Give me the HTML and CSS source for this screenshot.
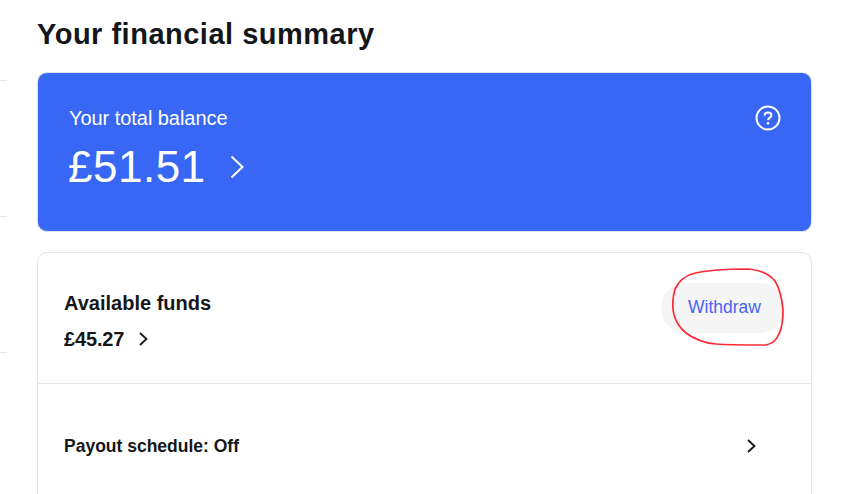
FILE: index.html
```html
<!DOCTYPE html>
<html lang="en">
<head>
    <meta charset="UTF-8">
    <title>Your financial summary</title>
    <link rel="stylesheet" href="styles.css">
</head>
<body>
    <div class="side">
        <div class="side-row side-row-first"></div>
        <div class="side-row"></div>
        <div class="side-row"></div>
    </div>
    <div class="main">
        <h1 class="page-title">Your financial summary</h1>
        <div class="balance">
            <div class="balance-text">
                <div class="balance-label">Your total balance</div>
                <div class="balance-amount">
                    £51.51
                    <svg class="balance-arrow" viewBox="0 0 14 24" width="14" height="24">
                        <path d="M1.5 1.5 L12.5 12 L1.5 22.5" fill="none" stroke="#fff" stroke-width="2"/>
                    </svg>
                </div>
            </div>
            <svg class="help" viewBox="0 0 26 26" width="26" height="26">
                <circle cx="13" cy="13" r="11.5" fill="none" stroke="#fff" stroke-width="2"/>
                <path d="M9.6 10.4 C9.6 8.4 11.1 7.4 13 7.4 C15 7.4 16.4 8.5 16.4 10.2 C16.4 12.6 13 12.6 13 15.2" fill="none" stroke="#fff" stroke-width="2"/>
                <circle cx="13" cy="18.2" r="1.3" fill="#fff"/>
            </svg>
        </div>
        <div class="funds-card">
            <div class="funds-row">
                <div>
                    <div class="funds-title">Available funds</div>
                    <div class="funds-amount">
                        £45.27
                        <svg viewBox="0 0 9 14" width="9" height="14">
                            <path d="M1 1 L7.5 7 L1 13" fill="none" stroke="#14161a" stroke-width="1.8"/>
                        </svg>
                    </div>
                </div>
                <div class="withdraw-wrap">
                    <a class="withdraw" href="javascript:;">Withdraw</a>
                    <!-- red marker drawn round the button -->
                    <svg class="marker" viewBox="0 0 116 82" width="116" height="82">
                        <path d="M2 47 C0 38 1 28 3 21 C7 13 13 8 20 6 C34 2 52 1 76 1 C90 2 98 7 103 13 C108 21 110 31 111 42 C111 52 110 60 107 66 C104 73 100 76 94 77 C76 77 56 77 44 76 C32 75 22 71 14 65 C8 60 4 54 2 47 Z" fill="none" stroke="#fb2b36" stroke-width="1.7"/>
                    </svg>
                </div>
            </div>
            <div class="payout-row">
                <div class="payout-title">Payout schedule: Off</div>
                <svg viewBox="0 0 9 14" width="9" height="14">
                    <path d="M1 1 L7.5 7 L1 13" fill="none" stroke="#14161a" stroke-width="1.8"/>
                </svg>
            </div>
        </div>
    </div>
</body>
</html>
```

FILE: styles.css
```css
* {
    margin: 0;
    padding: 0;
    box-sizing: border-box;
}

html, body {
    height: 494px;
    overflow: hidden;
}

body {
    display: flex;
    background-color: #fff;
    color: #14161a;
    font-family: "Liberation Sans", Arial, sans-serif;
}

.side {
    width: 7px;
    flex-shrink: 0;
}

.side-row {
    height: 136px;
    border-bottom: 1px solid #e6e6e6;
}

.side-row-first {
    height: 81px;
}

.main {
    width: 775px;
    margin-left: 30px;
    flex-shrink: 0;
}

.page-title {
    height: 72px;
    padding-top: 16px;
    font-size: 29px;
    line-height: 36px;
    font-weight: 700;
    letter-spacing: 0.5px;
}

.balance {
    height: 160px;
    display: flex;
    justify-content: space-between;
    padding: 32px 30px 0 30px;
    background-color: #3767f4;
    border: 1px solid #dfe3ea;
    border-radius: 10px;
    color: #fff;
}

.balance-label {
    margin-left: 1px;
    font-size: 20px;
    line-height: 26px;
    letter-spacing: -0.05px;
}

.balance-amount {
    display: flex;
    align-items: center;
    gap: 24px;
    margin-top: 10px;
    font-size: 44px;
    line-height: 52px;
    letter-spacing: 0.5px;
}

.funds-card {
    margin-top: 20px;
    height: 300px;
    border: 1px solid #e6e6e6;
    border-radius: 10px;
}

.funds-row {
    height: 131px;
    display: flex;
    justify-content: space-between;
    padding: 30px 26px 0 26px;
    border-bottom: 1px solid #e6e6e6;
}

.funds-title {
    height: 40px;
    font-size: 20px;
    line-height: 40px;
    font-weight: 700;
}

.funds-amount {
    display: flex;
    align-items: center;
    gap: 15px;
    margin-top: 3px;
    font-size: 20px;
    line-height: 26px;
    font-weight: 700;
    letter-spacing: -0.15px;
}

.withdraw-wrap {
    position: relative;
}

.withdraw {
    display: block;
    width: 124px;
    height: 50px;
    padding-left: 27px;
    line-height: 48px;
    font-size: 17.5px;
    color: #4a63ee;
    background-color: #f5f5f5;
    border-radius: 25px;
    text-decoration: none;
}

.marker {
    position: absolute;
    left: 11px;
    top: -15px;
}

.payout-row {
    display: flex;
    justify-content: space-between;
    align-items: center;
    height: 123px;
    padding: 0 55px 0 26px;
}

.payout-title {
    margin-top: 1px;
    font-size: 17.5px;
    font-weight: 700;
}
```
